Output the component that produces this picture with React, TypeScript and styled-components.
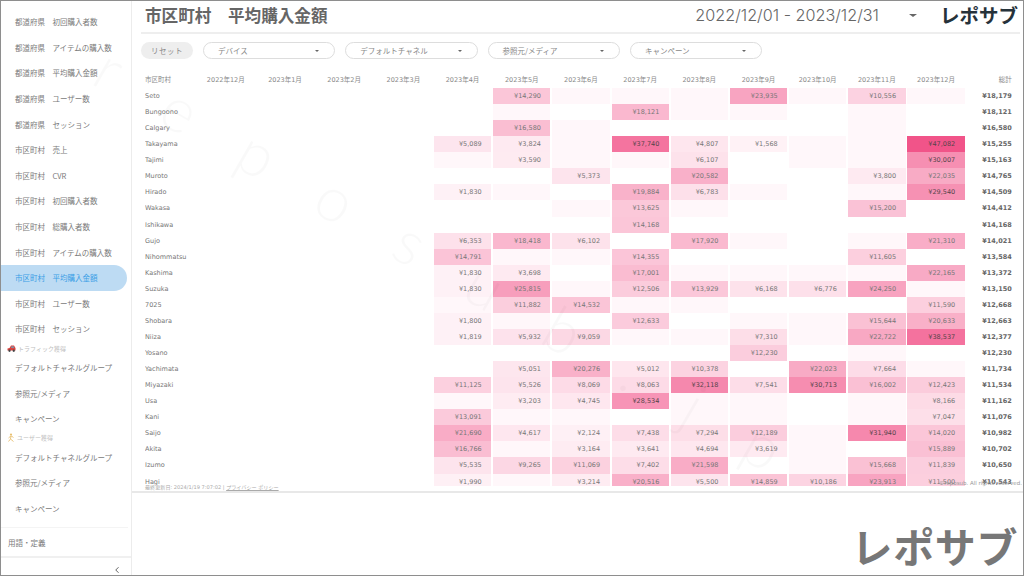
import styled, { createGlobalStyle } from "styled-components";
import { ChevronLeft } from "lucide-react";

const GlobalStyle = createGlobalStyle`
  html, body {
    margin: 0;
    padding: 0;
    background: #fff;
  }
`;

const cjk = `"Noto Sans CJK JP", sans-serif`;
const tableFont = `"DejaVu Sans", "Noto Sans CJK JP", sans-serif`;

type NavRow = { label: string; active?: boolean };
type Cell = number | null;
type Row = { name: string; cells: Cell[]; total: string };

const prefItems = ["初回購入者数", "アイテムの購入数", "平均購入金額", "ユーザー数", "セッション"];
const cityItems = ["売上", "CVR", "初回購入者数", "総購入者数", "アイテムの購入数", "平均購入金額", "ユーザー数", "セッション"];
const acquisitionItems = ["デフォルトチャネルグループ", "参照元/メディア", "キャンペーン"];

const navRows: NavRow[] = [
  ...prefItems.map((m) => ({ label: `都道府県　${m}` })),
  ...cityItems.map((m) => ({ label: `市区町村　${m}`, active: m === "平均購入金額" })),
];

const months = [
  "2022年12月", "2023年1月", "2023年2月", "2023年3月", "2023年4月", "2023年5月", "2023年6月",
  "2023年7月", "2023年8月", "2023年9月", "2023年10月", "2023年11月", "2023年12月",
];

// null = empty white cell, 0 = pale cell without a value
const N = null;
const rows: Row[] = [
  { name: "Seto", cells: [N, 14290, 0, 0, 0, 23935, 0, 10556, 0], total: "¥18,179" },
  { name: "Bungoono", cells: [N, 0, N, 18121, 0, 0, N, 0, N], total: "¥18,121" },
  { name: "Calgary", cells: [N, 16580, 0, N, N, N, N, 0, N], total: "¥16,580" },
  { name: "Takayama", cells: [5089, 3824, 0, 37740, 4807, 1568, 0, 0, 47082], total: "¥15,255" },
  { name: "Tajimi", cells: [0, 3590, 0, 0, 6107, N, 0, 0, 30007], total: "¥15,163" },
  { name: "Muroto", cells: [N, N, 5373, N, 20582, N, N, 3800, 22035], total: "¥14,765" },
  { name: "Hirado", cells: [1830, 0, N, 19884, 6783, 0, N, 0, 29540], total: "¥14,509" },
  { name: "Wakasa", cells: [N, N, 0, 13625, 0, N, N, 15200, N], total: "¥14,412" },
  { name: "Ishikawa", cells: [N, N, N, 14168, N, N, N, N, N], total: "¥14,168" },
  { name: "Gujo", cells: [6353, 18418, 6102, N, 17920, 0, N, 0, 21310], total: "¥14,021" },
  { name: "Nihommatsu", cells: [14791, 0, 0, 14355, N, N, N, 11605, N], total: "¥13,584" },
  { name: "Kashima", cells: [1830, 3698, N, 17001, 0, 0, 0, 0, 22165], total: "¥13,372" },
  { name: "Suzuka", cells: [1830, 25815, 0, 12506, 13929, 6168, 6776, 24250, 0], total: "¥13,150" },
  { name: "7025", cells: [0, 11882, 14532, 0, 0, N, N, N, 11590], total: "¥12,668" },
  { name: "Shobara", cells: [1800, 0, N, 12633, N, 0, 0, 15644, 20633], total: "¥12,663" },
  { name: "Niiza", cells: [1819, 5932, 9059, 0, 0, 7310, 0, 22722, 38537], total: "¥12,377" },
  { name: "Yosano", cells: [N, N, N, N, N, 12230, N, 0, N], total: "¥12,230" },
  { name: "Yachimata", cells: [N, 5051, 20276, 5012, 10378, N, 22023, 7664, 0], total: "¥11,734" },
  { name: "Miyazaki", cells: [11125, 5526, 8069, 8063, 32118, 7541, 30713, 16002, 12423], total: "¥11,534" },
  { name: "Usa", cells: [0, 3203, 4745, 28534, 0, 0, N, 0, 8166], total: "¥11,162" },
  { name: "Kani", cells: [13091, 0, 0, N, 0, 0, N, 0, 7047], total: "¥11,076" },
  { name: "Saijo", cells: [21690, 4617, 2124, 7438, 7294, 12189, 0, 31940, 14020], total: "¥10,982" },
  { name: "Akita", cells: [16766, 0, 3164, 3641, 4694, 3619, 0, N, 15889], total: "¥10,702" },
  { name: "Izumo", cells: [5535, 9265, 11069, 7402, 21598, N, 0, 15668, 11839], total: "¥10,650" },
  { name: "Hagi", cells: [1990, 0, 3214, 20516, 5500, 14859, 10186, 23913, 11500], total: "¥10,543" },
];

const heat = (v: number) => {
  const t = Math.min(v / 47082, 1);
  const r = Math.round(255 + (241 - 255) * t);
  const g = Math.round(247 + (84 - 247) * t);
  const b = Math.round(250 + (137 - 250) * t);
  return `rgb(${r},${g},${b})`;
};

const Car = () => (
  <svg width="9" height="7" viewBox="0 0 18 14">
    <path d="M1 11V7l4-1 3-5h6l3 5v5z" fill="#d9433f" />
    <path d="M9 2.5h4l1.6 3.5H8z" fill="#7c93a8" />
    <circle cx="5" cy="11.5" r="2.3" fill="#444" />
    <circle cx="13.5" cy="11.5" r="2.3" fill="#444" />
  </svg>
);

const Runner = () => (
  <svg width="8" height="9" viewBox="0 0 16 18">
    <circle cx="8" cy="3" r="2.2" fill="#e8c070" />
    <path d="M8 5.5 3 10M8 5.5l5 3.5M8 6l-1 6-4 5M7 12l6 5" stroke="#e6b860" strokeWidth="1.6" fill="none" />
  </svg>
);

const Logo = styled.div<{ $big?: boolean }>`
  font-family: ${cjk};
  font-weight: 700;
  white-space: nowrap;
  font-size: ${(p) => (p.$big ? "41px" : "19.5px")};
  line-height: 1.1;
  color: ${(p) => (p.$big ? "#777" : "#26323a")};
  letter-spacing: ${(p) => (p.$big ? "0.6px" : "0")};
`;

const App = () => {
  return (
    <Frame>
      <GlobalStyle />
      <Sidebar>
        <Nav>
          {navRows.map((r) => (
            <NavItem key={r.label} $active={r.active}>
              {r.label}
            </NavItem>
          ))}
          <SectionLabel>
            <Car />
            トラフィック獲得
          </SectionLabel>
          {acquisitionItems.map((l) => (
            <NavItem key={l}>{l}</NavItem>
          ))}
          <SectionLabel>
            <Runner />
            ユーザー獲得
          </SectionLabel>
          {acquisitionItems.map((l) => (
            <NavItem key={l}>{l}</NavItem>
          ))}
        </Nav>
        <Terms>用語・定義</Terms>
        <Collapse>
          <ChevronLeft size={10} strokeWidth={2} color="#444" />
        </Collapse>
      </Sidebar>
      <Main>
        <Header>
          <Title>市区町村　平均購入金額</Title>
          <DateRange>2022/12/01 - 2023/12/31</DateRange>
          <Caret />
          <Logo>レポサブ</Logo>
        </Header>
        <Filters>
          <Reset>リセット</Reset>
          <Filter>
            デバイス
            <SmallCaret />
          </Filter>
          <Filter>
            デフォルトチャネル
            <SmallCaret />
          </Filter>
          <Filter>
            参照元/メディア
            <SmallCaret />
          </Filter>
          <Filter>
            キャンペーン
            <SmallCaret />
          </Filter>
        </Filters>
        <TableArea>
          <Table>
            <HeadName>市区町村</HeadName>
            {months.map((m) => (
              <HeadMonth key={m}>{m}</HeadMonth>
            ))}
            <HeadTotal>総計</HeadTotal>
            {rows.map((row) => (
              <Tr key={row.name}>
                <Name>{row.name}</Name>
                <Blank />
                <Blank />
                <Blank />
                <Blank />
                {row.cells.map((c, i) =>
                  c === null ? (
                    <Blank key={i} />
                  ) : (
                    <Value key={i} $strong={c > 28000} style={{ background: heat(c) }}>
                      {c > 0 ? `¥${c.toLocaleString("en-US")}` : ""}
                    </Value>
                  ),
                )}
                <Total>{row.total}</Total>
              </Tr>
            ))}
          </Table>
          <Updated>
            最終更新日: 2024/1/19 7:07:02 | <PolicyLink>プライバシー ポリシー</PolicyLink>
          </Updated>
          <Copyright>©reposub. All rights reserved.</Copyright>
        </TableArea>
        <Bottom>
          <Logo $big>レポサブ</Logo>
        </Bottom>
      </Main>
      <Watermark>reposub.jp</Watermark>
    </Frame>
  );
};

const Frame = styled.div`
  position: relative;
  box-sizing: border-box;
  width: 1024px;
  height: 576px;
  display: flex;
  overflow: hidden;
  border: 1px solid #8e8e8e;
  background: #fff;
`;

const Sidebar = styled.aside`
  box-sizing: border-box;
  flex: 0 0 131px;
  display: flex;
  flex-direction: column;
  border-right: 1px solid #ececec;
  padding-top: 8px;
  font-family: ${cjk};
`;

const Nav = styled.nav`
  display: flex;
  flex-direction: column;
  height: 518px;
  border-bottom: 1px solid #f4f4f4;
  margin-right: 3px;
`;

const NavItem = styled.div<{ $active?: boolean }>`
  flex: 0 0 25.6px;
  display: flex;
  align-items: center;
  box-sizing: border-box;
  padding-left: 14px;
  margin-right: 1px;
  border-radius: 0 13px 13px 0;
  font-size: 7.5px;
  white-space: nowrap;
  color: ${(p) => (p.$active ? "#3a9ee6" : "#7a7a7a")};
  background: ${(p) => (p.$active ? "#bddbf3" : "transparent")};
`;

const SectionLabel = styled.div`
  flex: 0 0 12.9px;
  display: flex;
  align-items: center;
  gap: 2px;
  padding-left: 6px;
  font-size: 6px;
  color: #c0c0c0;
`;

const Terms = styled.div`
  flex: 0 0 30px;
  display: flex;
  align-items: center;
  padding-left: 7px;
  box-sizing: border-box;
  font-size: 7.5px;
  color: #7a7a7a;
  border-bottom: 2px solid #f0f0f0;
`;

const Collapse = styled.div`
  flex: 1;
  display: flex;
  align-items: flex-end;
  justify-content: flex-end;
  padding-right: 9px;
`;

const Main = styled.main`
  flex: 1;
  min-width: 0;
  display: flex;
  flex-direction: column;
`;

const Header = styled.header`
  box-sizing: border-box;
  height: 33px;
  margin: 0 3px 0 9px;
  padding: 0 2px 3px 4px;
  display: flex;
  align-items: center;
  border-bottom: 2px solid #eeeeee;
`;

const Title = styled.h1`
  margin: 0;
  flex: 1;
  font-family: ${cjk};
  font-size: 16.6px;
  font-weight: 700;
  color: #666;
  white-space: nowrap;
`;

const DateRange = styled.div`
  font-family: Inter, sans-serif;
  font-weight: 300;
  font-size: 16.2px;
  color: #666;
  white-space: nowrap;
`;

const Caret = styled.span`
  width: 0;
  height: 0;
  margin: 0 23px 0 30px;
  border-left: 4px solid transparent;
  border-right: 4px solid transparent;
  border-top: 3px solid #666;
`;

const Filters = styled.div`
  display: flex;
  align-items: center;
  gap: 10px;
  margin: 8px 0 0 9px;
  height: 17px;
  font-family: ${cjk};
  font-size: 7.5px;
  color: #888;
`;

const Reset = styled.div`
  width: 52px;
  height: 17px;
  display: flex;
  align-items: center;
  justify-content: center;
  border-radius: 9px;
  background: #eeeeee;
  letter-spacing: 0.5px;
`;

const Filter = styled.div`
  position: relative;
  box-sizing: border-box;
  width: 132.3px;
  height: 17px;
  display: flex;
  align-items: center;
  justify-content: space-between;
  padding: 0 15px 0 14px;
  border: 1px solid #dddddd;
  border-radius: 9px;
`;

const SmallCaret = styled.span`
  width: 0;
  height: 0;
  border-left: 2px solid transparent;
  border-right: 2px solid transparent;
  border-top: 2px solid #666;
`;

const TableArea = styled.div`
  position: relative;
  box-sizing: border-box;
  height: 434px;
  padding-top: 12px;
  border-bottom: 2px solid #e8e8e8;
`;

const Table = styled.div`
  display: grid;
  grid-template-columns: 52.2px repeat(13, 59.2px) 45.2px;
  grid-template-rows: 17px;
  grid-auto-rows: 16.07px;
  height: 415px;
  margin-left: 13px;
  overflow: hidden;
  font-family: ${tableFont};
  font-size: 6.5px;
  color: #777;
`;

const Tr = styled.div`
  display: grid;
  grid-column: 1 / -1;
  grid-template-columns: subgrid;
`;

const HeadName = styled.div`
  display: flex;
  align-items: center;
  padding-bottom: 2px;
  color: #888;
`;

const HeadMonth = styled(HeadName)`
  justify-content: center;
  padding-right: 2px;
`;

const HeadTotal = styled(HeadName)`
  justify-content: flex-end;
`;

const Name = styled.div`
  display: flex;
  align-items: center;
  white-space: nowrap;
`;

const Blank = styled.div``;

const Value = styled.div<{ $strong?: boolean }>`
  display: flex;
  align-items: center;
  justify-content: flex-end;
  margin-right: 1.9px;
  padding-right: 9.5px;
  color: ${(p) => (p.$strong ? "#55444a" : "#777")};
`;

const Total = styled.div`
  display: flex;
  align-items: center;
  justify-content: flex-end;
  font-weight: 700;
  color: #666;
`;

const Updated = styled.div`
  position: absolute;
  left: 13px;
  bottom: 1px;
  font-family: ${tableFont};
  font-size: 5.1px;
  color: #aaa;
  white-space: nowrap;
`;

const PolicyLink = styled.span`
  text-decoration: underline;
`;

const Copyright = styled.div`
  position: absolute;
  right: 1px;
  bottom: 5px;
  font-family: ${tableFont};
  font-size: 5.5px;
  color: #999;
  white-space: nowrap;
`;

const Bottom = styled.div`
  flex: 1;
  display: flex;
  align-items: flex-end;
  justify-content: flex-end;
  padding: 0 5px 7px 0;
`;

const Watermark = styled.div`
  position: absolute;
  left: 100px;
  top: 30px;
  font-family: Lato, sans-serif;
  font-weight: 300;
  font-size: 62px;
  line-height: 1;
  letter-spacing: 56px;
  white-space: nowrap;
  color: rgba(0, 0, 0, 0.022);
  transform: rotate(30deg);
  transform-origin: 0 50%;
  pointer-events: none;
`;

export default App;
